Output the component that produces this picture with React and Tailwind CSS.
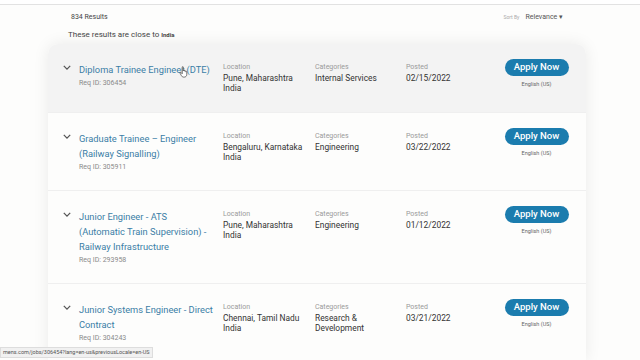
import React from 'react';

const jobs = [
  {
    title: 'Diploma Trainee Engineer (DTE)',
    reqId: '306454',
    location: ['Pune, Maharashtra', 'India'],
    category: ['Internal Services'],
    posted: '02/15/2022',
    hover: true,
  },
  {
    title: 'Graduate Trainee – Engineer (Railway Signalling)',
    reqId: '305911',
    location: ['Bengaluru, Karnataka', 'India'],
    category: ['Engineering'],
    posted: '03/22/2022',
  },
  {
    title: 'Junior Engineer - ATS (Automatic Train Supervision) - Railway Infrastructure',
    reqId: '293958',
    location: ['Pune, Maharashtra', 'India'],
    category: ['Engineering'],
    posted: '01/12/2022',
  },
  {
    title: 'Junior Systems Engineer - Direct Contract',
    reqId: '304243',
    location: ['Chennai, Tamil Nadu', 'India'],
    category: ['Research &', 'Development'],
    posted: '03/21/2022',
  },
];

const Chevron = () => (
  <svg viewBox="0 0 10 6" className="w-[8px] h-[5px] mt-[3px]" fill="none" stroke="#555" strokeWidth="1.6">
    <path d="M1 1 L5 5 L9 1" />
  </svg>
);

const Cursor = () => (
  <svg viewBox="0 0 16 20" className="absolute left-[100px] top-[4px] w-[10px] h-[12px]">
    <path
      d="M5 1.5 C5 0.7 6.8 0.7 6.8 1.5 V8 L7.2 6.8 C7.2 6 9 6 9 6.8 V8.5 C9 7.7 10.8 7.7 10.8 8.5 V9.5 C10.8 8.7 12.6 8.7 12.6 9.5 V14 C12.6 16.5 11 18.5 8.5 18.5 H7.5 C5.5 18.5 4.5 17.5 3.5 15.8 L1.2 11.6 C0.8 10.8 2 10 2.8 10.8 L5 13 Z"
      fill="#fff"
      stroke="#222"
      strokeWidth="1"
    />
  </svg>
);

const JobRow = ({ job, last }) => (
  <div
    className={`flex items-start pl-[15px] pr-[3px] py-[18px] ${job.hover ? 'bg-[#f3f3f3]' : 'bg-[#fdfdfc]'} ${last ? '' : 'border-b border-[#efefef]'}`}
  >
    <div className="w-[16px] shrink-0 flex justify-start">
      <Chevron />
    </div>
    <div className="w-[144px] shrink-0 relative">
      <p className="w-[135px] text-[9.3px] leading-[15px] text-[#3b7ea6]">{job.title}</p>
      <p className="text-[7px] leading-[10px] text-[#8a8a8a] mt-[1px]">Req ID: {job.reqId}</p>
      {job.hover && <Cursor />}
    </div>
    <div className="w-[92px] shrink-0">
      <p className="text-[7px] leading-[11px] text-[#9a9a9a]">Location</p>
      {job.location.map((l) => (
        <p key={l} className="text-[8.4px] leading-[10.5px] text-[#333]">{l}</p>
      ))}
    </div>
    <div className="w-[91px] shrink-0">
      <p className="text-[7px] leading-[11px] text-[#9a9a9a]">Categories</p>
      {job.category.map((c) => (
        <p key={c} className="text-[8.4px] leading-[10.5px] text-[#333]">{c}</p>
      ))}
    </div>
    <div className="w-[84px] shrink-0">
      <p className="text-[7px] leading-[11px] text-[#9a9a9a]">Posted</p>
      <p className="text-[8.4px] leading-[10.5px] text-[#333]">{job.posted}</p>
    </div>
    <div className="flex-1 flex flex-col items-center -mt-[3px]">
      <button className="h-[17px] w-[64px] rounded-full bg-[#1b7cae] text-white text-[9.5px] font-medium">
        Apply Now
      </button>
      <p className="text-[5.5px] text-[#666] mt-[4px]">English (US)</p>
    </div>
  </div>
);

const App = () => {
  return (
    <div className="w-[640px] h-[360px] overflow-hidden bg-[#fdfdfc] relative font-['Roboto',_'Liberation_Sans',_sans-serif]">
      <div className="h-[5px] border-b border-[#e2e2e2] bg-white" />
      <div className="pl-[71px] pr-[77px] pt-[7px] flex items-center justify-between">
        <span className="text-[7px] text-[#444]">834 Results</span>
        <div className="flex items-center gap-[6px]">
          <span className="text-[5px] text-[#aaa]">Sort By</span>
          <span className="text-[7px] text-[#555]">Relevance ▾</span>
        </div>
      </div>
      <p className="pl-[68px] mt-[6px] text-[8px] text-[#444]">
        These results are close to <span className="text-[6px] font-bold">India</span>
      </p>
      <div className="ml-[48px] w-[538px] mt-[3px] rounded-t-[10px] overflow-hidden shadow-[0_0_16px_rgba(0,0,0,0.08)]">
        {jobs.map((job, i) => (
          <JobRow key={job.reqId} job={job} last={i === jobs.length - 1} />
        ))}
      </div>
      <div className="absolute left-0 bottom-[2px] h-[11px] px-[2px] bg-[#f1f1f1] border border-[#ddd] text-[5.5px] leading-[9px] text-[#555] whitespace-nowrap">
        mens.com/jobs/306454?lang=en-us&amp;previousLocale=en-US
      </div>
    </div>
  );
};

export default App;
